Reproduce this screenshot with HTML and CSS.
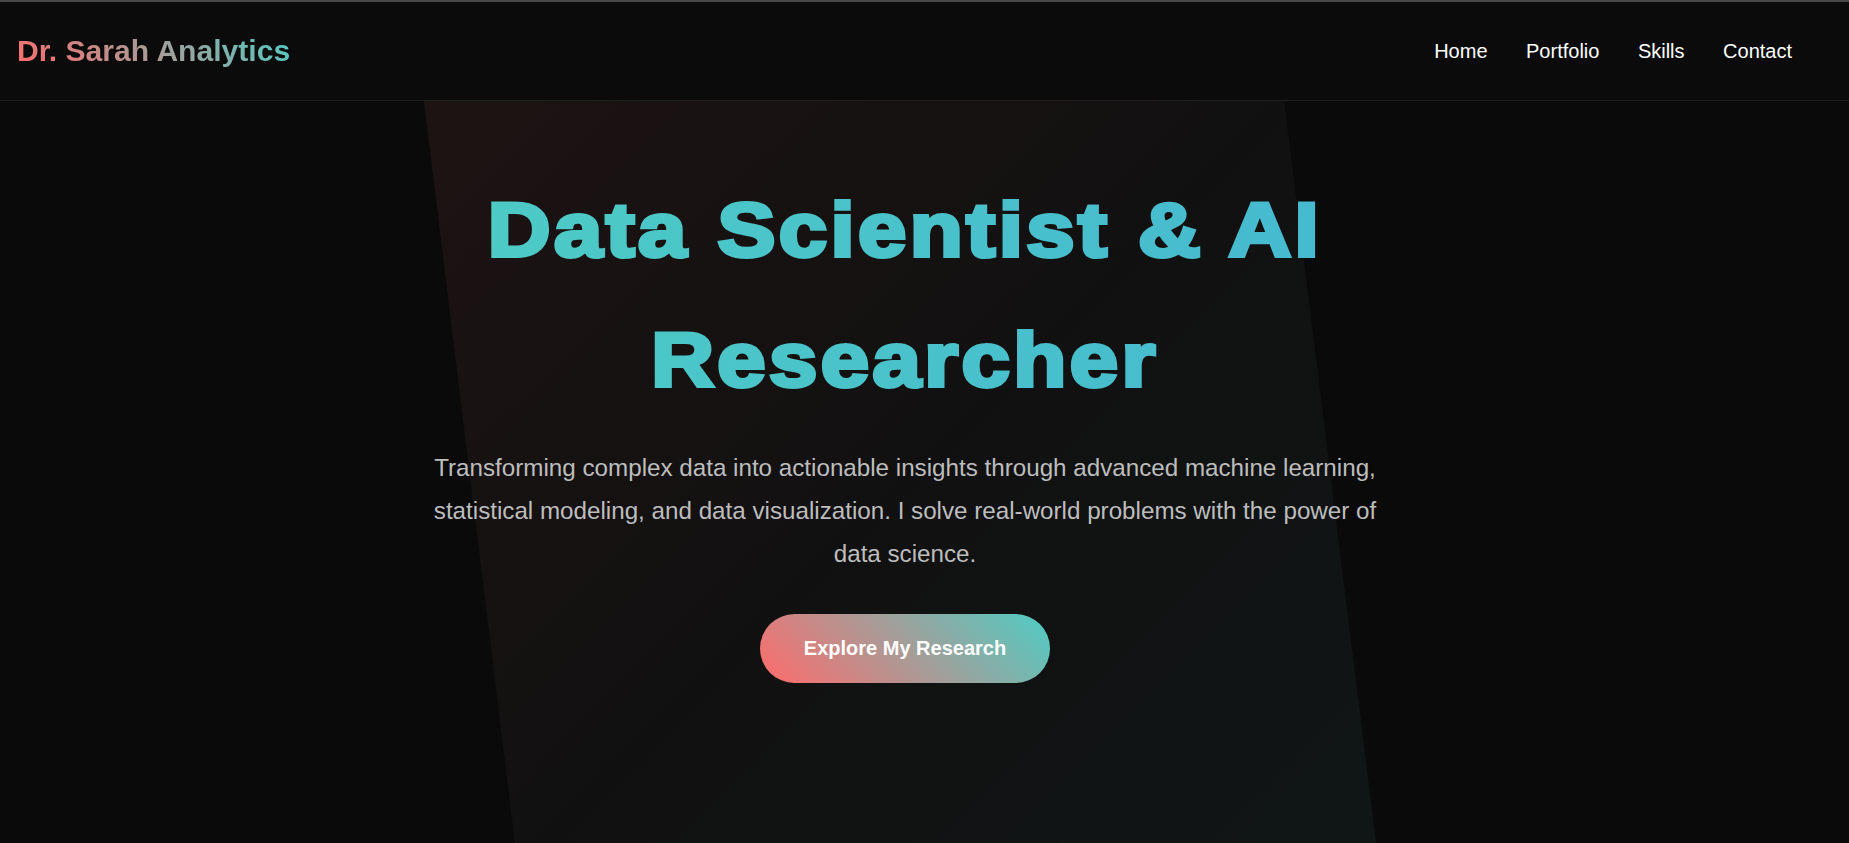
FILE: index.html
```html
<!DOCTYPE html>
<html lang="en">
<head>
<meta charset="utf-8">
<title>Dr. Sarah Analytics</title>
<link rel="stylesheet" href="styles.css">
</head>
<body>
<header class="site-header">
  <a class="logo" href="#">Dr. Sarah Analytics</a>
  <nav class="nav">
    <a href="#" class="nav-link">Home</a>
    <a href="#" class="nav-link">Portfolio</a>
    <a href="#" class="nav-link">Skills</a>
    <a href="#" class="nav-link">Contact</a>
  </nav>
</header>
<main class="hero">
  <div class="hero-content">
    <h1 class="hero-title">Data Scientist &amp; AI Researcher</h1>
    <p class="hero-text">Transforming complex data into actionable insights through advanced machine learning, statistical modeling, and data visualization. I solve real-world problems with the power of data science.</p>
    <a href="#" class="btn">Explore My Research</a>
  </div>
</main>
</body>
</html>
```
FILE: styles.css
```css
* { box-sizing: border-box; }

html, body {
  margin: 0;
  padding: 0;
  background: #0a0a0a;
  font-family: "Liberation Sans", Arial, sans-serif;
  overflow: hidden;
}

.site-header {
  box-sizing: content-box;
  height: 98px;
  display: flex;
  align-items: center;
  justify-content: space-between;
  padding: 0 57px 0 17px;
  background: #0b0b0b;
  border-top: 2px solid #4a4a4a;
  border-bottom: 1px solid #1f1f1f;
}

.logo {
  font-size: 30.1px;
  font-weight: 700;
  text-decoration: none;
  background: linear-gradient(45deg, #ff6b6b, #4ecdc4);
  -webkit-background-clip: text;
  background-clip: text;
  color: transparent;
  -webkit-text-fill-color: transparent;
}

.nav {
  display: flex;
  gap: 38.5px;
}

.nav-link {
  color: #ffffff;
  text-decoration: none;
  font-size: 20px;
}

.hero {
  position: relative;
  min-height: calc(100vh - 101px);
  padding: 64px 39px 0 0;
  display: flex;
  justify-content: center;
  overflow: hidden;
}

.hero::before {
  content: "";
  position: absolute;
  inset: 0;
  background: linear-gradient(135deg, rgba(255, 107, 107, 0.1) 0%, rgba(150, 140, 140, 0.05) 50%, rgba(78, 205, 196, 0.08) 100%);
  clip-path: polygon(424px 0, 1284px 0, 1376px 742px, 515px 742px);
}

.hero-content {
  position: relative;
  max-width: 960px;
  display: flex;
  flex-direction: column;
  align-items: center;
  text-align: center;
}

.hero-title {
  margin: 0;
  font-size: 76px;
  line-height: 130px;
  font-weight: 700;
  letter-spacing: 3px;
  transform: scaleX(1.143);
  background: linear-gradient(90deg, #4ecdc4, #45b7d1);
  -webkit-background-clip: text;
  background-clip: text;
  color: transparent;
  -webkit-text-fill-color: transparent;
  -webkit-text-stroke: 4px transparent;
}

.hero-text {
  margin: 21px 0 0;
  font-size: 24.2px;
  line-height: 43.2px;
  color: #bdbdbd;
}

.btn {
  margin-top: 38px;
  display: inline-block;
  padding: 23px 44px;
  line-height: 23px;
  font-size: 20px;
  font-weight: 700;
  color: #ffffff;
  text-decoration: none;
  border-radius: 50px;
  background: linear-gradient(45deg, #ff6b6b, #4ecdc4);
}
```
